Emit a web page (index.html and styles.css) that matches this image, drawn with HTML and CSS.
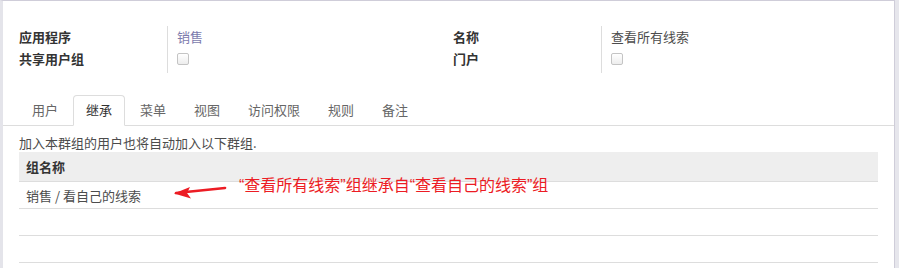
FILE: index.html
```html
<!DOCTYPE html>
<html lang="zh-CN">
<head>
    <meta charset="UTF-8">
    <title>查看所有线索</title>
    <link rel="stylesheet" href="styles.css">
</head>
<body>

<div class="sheet">
    <!-- Group header fields -->
    <div class="fields">
        <div class="field-group">
            <div class="labels">
                <div class="label">应用程序</div>
                <div class="label">共享用户组</div>
            </div>
            <div class="values">
                <div class="value"><a href="#" class="link">销售</a></div>
                <div class="value"><span class="checkbox"></span></div>
            </div>
        </div>
        <div class="field-group">
            <div class="labels">
                <div class="label">名称</div>
                <div class="label">门户</div>
            </div>
            <div class="values">
                <div class="value">查看所有线索</div>
                <div class="value"><span class="checkbox"></span></div>
            </div>
        </div>
    </div>

    <!-- Tabs -->
    <ul class="tabs">
        <li><a href="#">用户</a></li>
        <li class="active"><a href="#">继承</a></li>
        <li><a href="#">菜单</a></li>
        <li><a href="#">视图</a></li>
        <li><a href="#">访问权限</a></li>
        <li><a href="#">规则</a></li>
        <li><a href="#">备注</a></li>
    </ul>

    <div class="tab-content">
        <p class="hint">加入本群组的用户也将自动加入以下群组.</p>
        <div class="table-wrap">
            <table class="list">
                <thead>
                    <tr><th>组名称</th></tr>
                </thead>
                <tbody>
                    <tr><td>销售 / 看自己的线索</td></tr>
                    <tr><td></td></tr>
                    <tr><td></td></tr>
                </tbody>
            </table>

            <!-- Annotation on top of the list -->
            <div class="note">
                <svg class="arrow" width="56" height="16" viewBox="0 0 56 16">
                    <path d="M2 9 L51 4" stroke="#ec1c24" stroke-width="2.6" stroke-linecap="round" fill="none"/>
                    <path d="M0 9.5 L16 3 L13 9 L17 14.5 Z" fill="#ec1c24"/>
                </svg>
                <span class="note-text">“查看所有线索”组继承自“查看自己的线索”组</span>
            </div>
        </div>
    </div>
</div>

</body>
</html>
```

FILE: styles.css
```css
body {
    margin: 0;
    padding: 0;
    background-color: #e6e6ec;
    font-family: "Noto Sans CJK SC", "Liberation Sans", sans-serif;
    font-size: 13px;
    color: #4c4c4c;
}
.sheet {
    width: 891px;
    height: 267px;
    background-color: #fff;
    border-top: 1px solid #cfcdd9;
    border-left: 3px solid #e4e4ea;
    border-right: 1px solid #cfcdd9;
    overflow: hidden;
}
.fields {
    display: grid;
    grid-template-columns: 434px 1fr;
    padding: 25px 16px 0 16px;
}
.field-group {
    display: grid;
    grid-template-columns: 148px 1fr;
}
.label {
    height: 22px;
    line-height: 22px;
    font-weight: bold;
    color: #333;
}
.values {
    border-left: 1px solid #ddd;
    padding-left: 9px;
    padding-bottom: 3px;
}
.value {
    height: 22px;
    line-height: 22px;
}
.link {
    color: #7c7bad;
    text-decoration: none;
}
.checkbox {
    display: inline-block;
    width: 10px;
    height: 10px;
    border: 1px solid #c4c4c4;
    border-radius: 2px;
    background: linear-gradient(#fff, #ededed);
    vertical-align: middle;
    margin-top: -3px;
}
.tabs {
    list-style: none;
    margin: 22px 0 0 0;
    padding: 0 16px;
    display: flex;
    border-bottom: 1px solid #ddd;
}
.tabs li {
    margin-right: 2px;
    margin-bottom: -1px;
}
.tabs a {
    display: block;
    padding: 3px 12px 4px 12px;
    line-height: 22px;
    color: #666;
    text-decoration: none;
    border: 1px solid transparent;
    border-radius: 4px 4px 0 0;
}
.tabs li.active a {
    color: #333;
    background-color: #fff;
    border-color: #ddd #ddd transparent #ddd;
}
.tab-content {
    padding: 0 16px;
}
.hint {
    margin: 8px 0 0 0;
    line-height: 18px;
}
.table-wrap {
    position: relative;
}
.list {
    width: 100%;
    border-collapse: collapse;
}
.list th {
    background-color: #eee;
    text-align: left;
    font-weight: bold;
    color: #333;
    height: 29px;
    padding: 0 7px;
    border-bottom: 1px solid #ddd;
}
.list td {
    height: 26px;
    padding: 0 7px;
    border-bottom: 1px solid #ddd;
}
.note {
    position: absolute;
    left: 155px;
    top: 24px;
}
.arrow {
    position: absolute;
    left: 0;
    top: 8px;
}
.note-text {
    position: absolute;
    left: 65px;
    top: 0;
    white-space: nowrap;
    font-family: "Liberation Sans", "Noto Sans CJK SC", sans-serif;
    font-size: 16px;
    line-height: 20px;
    color: #ec1c24;
}
```
